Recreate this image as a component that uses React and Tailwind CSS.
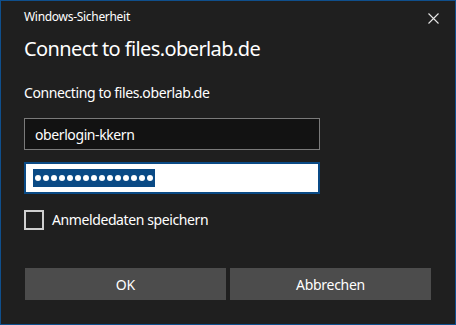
export default function App() {
  return (
    <div
      className="w-[456px] h-[325px] bg-[#1f1f1f] border border-[#0f4f8c] text-white flex flex-col"
      style={{fontFamily: '"Noto Sans", "Open Sans", sans-serif'}}
    >
      <div className="flex items-start justify-between pl-[23px] pr-[16px] pt-[7px] h-[30px]">
        <span className="text-[12px] leading-[18px] tracking-[-0.3px]">Windows-Sicherheit</span>
        <svg width="11" height="11" viewBox="0 0 11 11" className="mt-[5px]">
          <path d="M0.5 0.5 L10.5 10.5 M10.5 0.5 L0.5 10.5" stroke="#e6e6e6" strokeWidth="1.1" fill="none"/>
        </svg>
      </div>

      <div className="pl-[23px] pr-[24px] flex flex-col">
        <h1 className="text-[20px] leading-[28px] mt-[4px] tracking-[-0.6px]">Connect to files.oberlab.de</h1>
        <p className="text-[14px] leading-[20px] mt-[20px] tracking-[-0.4px]">Connecting to files.oberlab.de</p>

        <div className="mt-[15px] w-[296px] h-[32px] bg-[#121212] border border-[#7a7a7a] flex items-center px-[10px] text-[14px] tracking-[-0.4px]">
          oberlogin-kkern
        </div>

        <div className="mt-[12px] w-[296px] h-[32px] bg-white border-2 border-[#0a4a85] flex items-center px-[7px]">
          <span className="bg-[#0a4a85] h-[18px] flex items-center px-[2px] gap-[2px]">
            {Array.from({length: 15}).map((_, i) => (
              <span key={i} className="w-[6px] h-[6px] rounded-full bg-white"/>
            ))}
          </span>
        </div>

        <label className="mt-[15px] flex items-center gap-[8px] text-[14px] tracking-[-0.4px]">
          <span className="w-[20px] h-[20px] border-2 border-[#cfcfcf]"/>
          Anmeldedaten speichern
        </label>
      </div>

      <div className="mt-auto mb-[24px] px-[24px] flex gap-[4px]">
        <button className="w-[201px] h-[32px] bg-[#4c4c4c] text-[14px] text-white">OK</button>
        <button className="w-[201px] h-[32px] bg-[#4c4c4c] text-[14px] text-white tracking-[-0.3px]">Abbrechen</button>
      </div>
    </div>
  );
}
